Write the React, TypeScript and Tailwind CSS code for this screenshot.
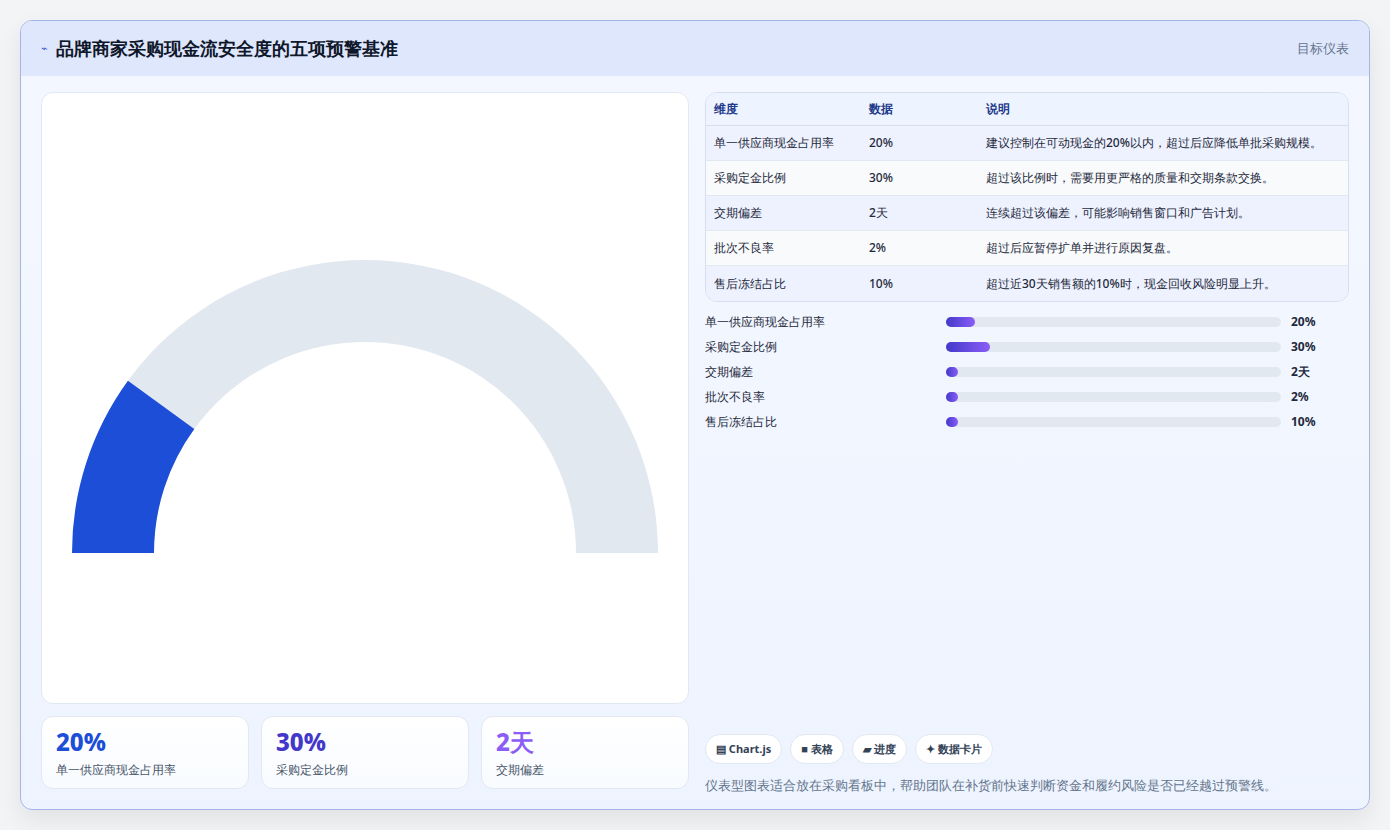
import React from "react";

const rows = [
  { name: "单一供应商现金占用率", value: "20%", pct: 20, note: "建议控制在可动现金的20%以内，超过后应降低单批采购规模。" },
  { name: "采购定金比例", value: "30%", pct: 30, note: "超过该比例时，需要用更严格的质量和交期条款交换。" },
  { name: "交期偏差", value: "2天", pct: 2, note: "连续超过该偏差，可能影响销售窗口和广告计划。" },
  { name: "批次不良率", value: "2%", pct: 2, note: "超过后应暂停扩单并进行原因复盘。" },
  { name: "售后冻结占比", value: "10%", pct: 4, note: "超过近30天销售额的10%时，现金回收风险明显上升。" },
];

const Gauge = () => {
  const cx = 323, cy = 460, R = 293, r = 211;
  const pt = (rad: number, a: number) => [cx - rad * Math.cos(a), cy - rad * Math.sin(a)];
  const a = (36 * Math.PI) / 180;
  const [ox, oy] = pt(R, a);
  const [ix, iy] = pt(r, a);
  return (
    <svg width="647" height="612" viewBox="0 0 647 612">
      <path d={`M ${cx - R} ${cy} A ${R} ${R} 0 0 1 ${cx + R} ${cy} L ${cx + r} ${cy} A ${r} ${r} 0 0 0 ${cx - r} ${cy} Z`} fill="#e2e8f0" />
      <path d={`M ${cx - R} ${cy} A ${R} ${R} 0 0 1 ${ox} ${oy} L ${ix} ${iy} A ${r} ${r} 0 0 0 ${cx - r} ${cy} Z`} fill="#1d4ed8" />
    </svg>
  );
};

export default function App() {
  return (
    <div className="min-h-[830px] bg-[#f3f4f6] p-5 font-['Noto_Sans','Noto_Sans_CJK_SC',sans-serif]">
      <div className="h-[790px] overflow-hidden rounded-xl border border-[#a5b4e8] bg-gradient-to-b from-[#f4f7ff] to-[#eef4ff] shadow-[0_10px_24px_rgba(0,0,0,0.08)]">
        <div className="flex h-[55px] items-center justify-between bg-[#dfe7fd] px-5">
          <div className="flex items-center gap-2">
            <span className="text-[11px] text-[#3b5bdb]">⌁</span>
            <h1 className="text-[18px] font-bold text-[#0f172a]">品牌商家采购现金流安全度的五项预警基准</h1>
          </div>
          <span className="text-[13px] text-[#64748b]">目标仪表</span>
        </div>
        <div className="flex gap-4 px-5 pt-4">
          <div className="flex w-[648px] flex-col gap-3">
            <div className="h-[612px] rounded-xl border border-[#e2e8f0] bg-white">
              <Gauge />
            </div>
            <div className="grid grid-cols-3 gap-3">
              {[
                ["20%", "单一供应商现金占用率", "text-[#1d4ed8]"],
                ["30%", "采购定金比例", "text-[#4338ca]"],
                ["2天", "交期偏差", "text-[#8b5cf6]"],
              ].map(([v, l, c]) => (
                <div key={l} className="h-[73px] rounded-xl border border-[#e2e8f0] bg-gradient-to-b from-white to-[#f8fbff] px-3.5 pt-2.5">
                  <div className={`text-[24px] font-extrabold leading-[30px] ${c}`}>{v}</div>
                  <div className="mt-1 text-[12px] text-[#475569]">{l}</div>
                </div>
              ))}
            </div>
          </div>
          <div className="flex w-[648px] flex-col">
            <div className="overflow-hidden rounded-xl border border-[#d7def0] text-[12px]">
              <div className="grid h-[33px] grid-cols-[155px_117px_1fr] items-center border-b border-[#d7def0] bg-[#eef4ff] px-2 font-bold text-[#1e3a8a]">
                <span>维度</span><span>数据</span><span>说明</span>
              </div>
              {rows.map((r, i) => (
                <div key={r.name} className={`grid h-[35px] grid-cols-[155px_117px_1fr] items-center px-2 font-medium text-[#1e293b] ${i % 2 ? "bg-[#f8fafc]" : "bg-[#eef2ff]"} ${i < 4 ? "border-b border-[#e2e8f0]" : ""}`}>
                  <span>{r.name}</span><span>{r.value}</span><span>{r.note}</span>
                </div>
              ))}
            </div>
            <div className="mt-2 flex flex-col">
              {rows.map((r) => (
                <div key={r.name} className="grid h-[24.8px] grid-cols-[241px_335px_1fr] items-center text-[12px] font-medium text-[#1e293b]">
                  <span>{r.name}</span>
                  <div className="h-[10px] rounded-full bg-[#e2e8f0]">
                    <div className="h-full rounded-full bg-gradient-to-r from-[#4338ca] to-[#8b5cf6]" style={{ width: `${Math.max(r.pct * 0.44, 3.5)}%` }} />
                  </div>
                  <span className="pl-2.5 font-bold">{r.value}</span>
                </div>
              ))}
            </div>
            <div className="mt-[300px] flex gap-2">
              {["▤ Chart.js", "■ 表格", "▰ 进度", "✦ 数据卡片"].map((t) => (
                <span key={t} className="rounded-full border border-[#e2e8f0] bg-white px-2.5 py-1.5 text-[11px] font-bold text-[#334155]">{t}</span>
              ))}
            </div>
            <p className="mt-3 text-[13px] text-[#64748b]">仪表型图表适合放在采购看板中，帮助团队在补货前快速判断资金和履约风险是否已经越过预警线。</p>
          </div>
        </div>
      </div>
    </div>
  );
}
